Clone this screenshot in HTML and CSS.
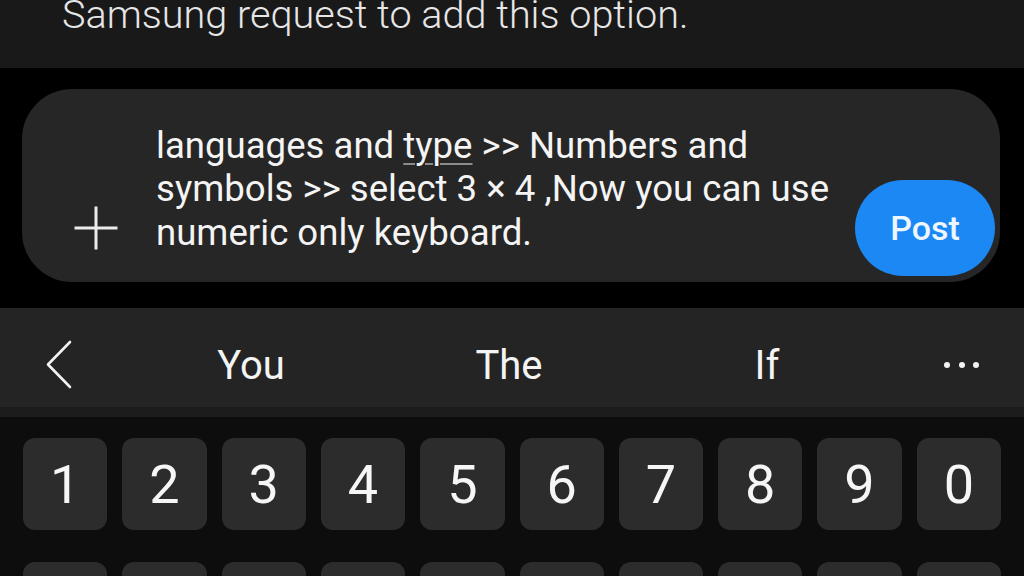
FILE: index.html
```html
<!DOCTYPE html>
<html lang="en">
<head>
<meta charset="utf-8">
<title>Reply</title>
<link rel="stylesheet" href="styles.css">
</head>
<body>
<div class="screen">
  <div class="prev">
    <p class="prev-text">Samsung request to add this option.</p>
  </div>
  <div class="composer-wrap">
    <div class="composer">
      <div class="attach">
        <svg width="46" height="46" viewBox="0 0 46 46" aria-hidden="true">
          <path d="M23 1.5V44.5M1.5 23H44.5" stroke="#ececec" stroke-width="3" fill="none"/>
        </svg>
      </div>
      <div class="draft">
        <div class="line">languages and <span class="spell">type</span> &gt;&gt; Numbers and</div>
        <div class="line">symbols &gt;&gt; select 3 × 4 ,Now you can use</div>
        <div class="line">numeric only keyboard.</div>
      </div>
      <button class="post">Post</button>
    </div>
  </div>
  <div class="suggest">
    <div class="slot back">
      <svg width="26" height="50" viewBox="0 0 26 50" aria-hidden="true">
        <path d="M24 2L2 24.5L24 47" stroke="#f2f2f2" stroke-width="2.6" fill="none" stroke-linecap="round" stroke-linejoin="round"/>
      </svg>
    </div>
    <div class="slot word">You</div>
    <div class="slot word">The</div>
    <div class="slot word">If</div>
    <div class="slot more"><span class="dot"></span><span class="dot"></span><span class="dot"></span></div>
  </div>
  <div class="keyboard">
    <div class="key">1</div><div class="key">2</div><div class="key">3</div><div class="key">4</div><div class="key">5</div>
    <div class="key">6</div><div class="key">7</div><div class="key">8</div><div class="key">9</div><div class="key">0</div>
    <div class="key"></div><div class="key"></div><div class="key"></div><div class="key"></div><div class="key"></div>
    <div class="key"></div><div class="key"></div><div class="key"></div><div class="key"></div><div class="key"></div>
  </div>
</div>
</body>
</html>
```
FILE: styles.css
```css
html, body {
  margin: 0;
  padding: 0;
  background: #000;
}
.screen {
  width: 1024px;
  height: 576px;
  overflow: hidden;
  font-family: Roboto, "Noto Sans", "Liberation Sans", sans-serif;
  color: #f2f2f2;
}
.prev {
  height: 68px;
  background: #191919;
  overflow: hidden;
  padding-left: 62px;
}
.prev-text {
  margin: -5px 0 0 0;
  font-size: 39.6px;
  font-weight: 300;
  line-height: 39px;
  color: #e6e6e6;
  white-space: nowrap;
}
.composer-wrap {
  padding: 21px 24px 26px 22px;
}
.composer {
  height: 193px;
  background: #262626;
  border-radius: 50px;
  display: flex;
  align-items: flex-end;
  padding-bottom: 6px;
  box-sizing: border-box;
}
.attach {
  width: 134px;
  height: 96px;
  display: flex;
  align-items: center;
  justify-content: flex-start;
  padding-left: 51px;
  box-sizing: border-box;
}
.draft {
  flex: 1;
  margin-bottom: 22px;
  font-size: 36.6px;
  line-height: 43.5px;
  color: #f4f4f4;
  white-space: nowrap;
}
.spell {
  text-decoration: underline;
  text-decoration-color: #8c8c8c;
  text-decoration-thickness: 2px;
  text-underline-offset: 5px;
}
.post {
  width: 140px;
  height: 96px;
  border: none;
  border-radius: 48px;
  background: #1c88f4;
  color: #eef6ff;
  font-family: Roboto, "Liberation Sans", sans-serif;
  font-size: 34px;
  font-weight: 500;
  padding: 0;
  margin-right: 5px;
}
.suggest {
  background: #242424;
  border-bottom: 10px solid #1c1c1c;
  display: grid;
  grid-template-columns: 122px 258px 258px 258px 1fr;
  padding-top: 15px;
  height: 84px;
}
.slot {
  display: flex;
  align-items: center;
  justify-content: center;
  height: 84px;
}
.back {
  justify-content: flex-start;
  padding-left: 46px;
}
.word {
  font-size: 40px;
  color: #f4f4f4;
}
.more {
  gap: 8.5px;
  justify-content: flex-start;
  padding-left: 48px;
}
.dot {
  width: 6px;
  height: 6px;
  border-radius: 50%;
  background: #f4f4f4;
}
.keyboard {
  background: #0d0d0d;
  display: grid;
  grid-template-columns: repeat(10, 1fr);
  column-gap: 15px;
  row-gap: 32px;
  padding: 21px 23px 0 23px;
  height: 200px;
}
.key {
  height: 92px;
  background: #2c2c2c;
  border-radius: 12px;
  display: flex;
  align-items: center;
  justify-content: center;
  font-size: 54px;
  color: #f6f6f6;
}
```
